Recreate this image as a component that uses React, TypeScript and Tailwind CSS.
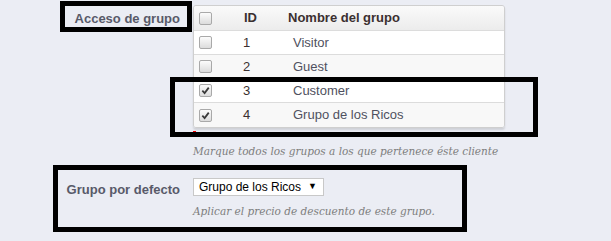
const groups = [
  { id: 1, name: "Visitor", checked: false },
  { id: 2, name: "Guest", checked: false },
  { id: 3, name: "Customer", checked: true },
  { id: 4, name: "Grupo de los Ricos", checked: true },
];

function Check({ checked }: { checked: boolean }) {
  return (
    <span className="flex h-[13px] w-[13px] items-center justify-center rounded-[2px] border border-[#a9a9a9] bg-gradient-to-b from-[#fcfcfc] to-[#dcdcdc]">
      {checked && (
        <svg viewBox="0 0 10 10" className="h-[9px] w-[9px]">
          <path d="M1.5 5.2 L4 7.8 L8.6 1.8" fill="none" stroke="#3a3a3a" strokeWidth="2" />
        </svg>
      )}
    </span>
  );
}

export default function App() {
  return (
    <div
      className="relative h-[241px] w-[611px] overflow-hidden bg-[#ebedf4]"
      style={{ fontFamily: '"Liberation Sans", Arial, sans-serif' }}
    >
      {/* Acceso de grupo */}
      <div className="flex pt-[5px]">
        <div className="w-[183px] shrink-0 pt-[4px] pr-[3px] text-right text-[13px] font-bold text-[#585a69]">
          Acceso de grupo
        </div>
        <div className="ml-[10px]">
          <div className="w-[312px] overflow-hidden rounded-[3px] border border-[#cfcfcf] shadow-[0_2px_2px_rgba(0,0,0,0.12)]">
            <div className="flex h-[25px] items-center border-b border-[#dcdcdc] bg-gradient-to-b from-[#fafafa] to-[#ececec] text-[13px] font-bold text-[#3b3030]">
              <div className="flex w-[50px] pl-[5px]">
                <Check checked={false} />
              </div>
              <div className="w-[44px]">ID</div>
              <div>Nombre del grupo</div>
            </div>
            {groups.map((g, i) => (
              <div
                key={g.id}
                className={`flex h-[24px] items-center text-[13px] text-[#4f5160] ${
                  i < groups.length - 1 ? "border-b border-[#dcdcdc]" : ""
                } ${i % 2 === 0 ? "bg-white" : "bg-[#f8f8f8]"}`}
              >
                <div className="flex w-[49px] pl-[5px]">
                  <Check checked={g.checked} />
                </div>
                <div className="w-[50px] text-[#3b3030]">{g.id}</div>
                <div>{g.name}</div>
              </div>
            ))}
          </div>
          <div className="mt-[3px] h-[2px] w-[3px] bg-[#e00]" />
          <p
            className="mt-[11px] text-[10.5px] italic text-[#7d7d7d]"
            style={{ fontFamily: '"DejaVu Serif", Georgia, serif' }}
          >
            Marque todos los grupos a los que pertenece éste cliente
          </p>
        </div>
      </div>

      {/* Grupo por defecto */}
      <div className="mt-[18px] flex">
        <div className="w-[183px] shrink-0 pt-[2px] pr-[3px] text-right text-[13px] font-bold text-[#585a69]">
          Grupo por defecto
        </div>
        <div className="ml-[10px]">
          <div className="flex h-[18px] w-[131px] items-center justify-between whitespace-nowrap border border-[#c8c8c8] bg-white pl-[5px] pr-[6px] text-[12px] text-black">
            <span>Grupo de los Ricos</span>
            <span className="text-[9px]">▼</span>
          </div>
          <p
            className="mt-[8px] text-[10.5px] italic text-[#7d7d7d]"
            style={{ fontFamily: '"DejaVu Serif", Georgia, serif' }}
          >
            Aplicar el precio de descuento de este grupo.
          </p>
        </div>
      </div>

      {/* annotation frames */}
      <div className="absolute left-[60px] top-[1px] h-[31px] w-[132px] border-[5px] border-black" />
      <div className="absolute left-[170px] top-[77px] h-[60px] w-[368px] border-[5px] border-black" />
      <div className="absolute left-[53px] top-[165px] h-[67px] w-[414px] border-[5px] border-black" />
    </div>
  );
}
